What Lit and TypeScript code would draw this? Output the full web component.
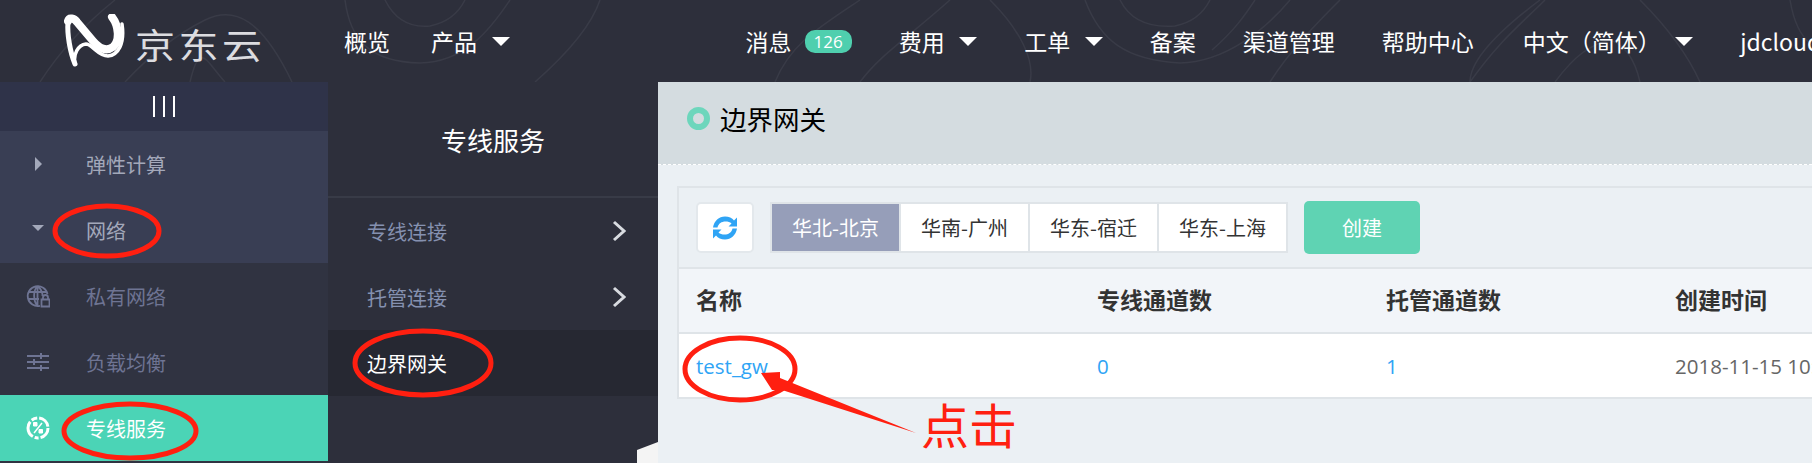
import type { TemplateResult } from 'lit';
import { css, html, LitElement, svg } from 'lit';
import { customElement } from 'lit/decorators.js';

const caret = html`<i class="caret"></i>`;

@customElement('app-root')
export class AppRoot extends LitElement {
  public static styles = css`
    :host {
      display: block;
      position: relative;
      width: 1812px;
      height: 463px;
      overflow: hidden;
      background: #2d2f3b;
      font-family: 'Noto Sans CJK SC', 'Open Sans', sans-serif;
      font-size: 20px;
    }

    .top {
      position: relative;
      display: flex;
      align-items: center;
      height: 82px;
      background: #2d2f3b;
      color: #fff;
      font-size: 23px;
      white-space: nowrap;
    }

    .lines {
      position: absolute;
      inset: 0;
    }

    .logo {
      position: relative;
      display: flex;
      align-items: center;
      width: 344px;
      height: 82px;
      padding-left: 64px;
      box-sizing: border-box;
      flex: none;
    }

    .logo-text {
      margin: 5px 0 0 10px;
      font-size: 40px;
      line-height: 1;
      letter-spacing: 3.500px;
      color: #dcdce0;
      transform: scaleY(0.88);
    }

    .nav {
      position: relative;
      display: flex;
      align-items: center;
      gap: 41px;
    }

    .nav.right {
      gap: 47px;
      margin-left: 236px;
    }

    .nav span.item {
      display: flex;
      align-items: center;
    }

    .nav span.lang {
      margin-left: 2px;
    }

    .caret {
      width: 0;
      height: 0;
      margin-left: 14.500px;
      border-left: 9px solid transparent;
      border-right: 9px solid transparent;
      border-top: 9px solid #fff;
    }

    .badge {
      margin-left: 13px;
      padding: 0 9px;
      height: 23px;
      line-height: 23px;
      border-radius: 10px;
      background: #4fcfae;
      font-size: 17px;
      font-family: 'Open Sans', sans-serif;
    }

    .body {
      display: flex;
      height: 381px;
    }

    .side {
      width: 328px;
      flex: none;
      background: #303341;
      color: #6e7493;
    }

    .toggle {
      display: flex;
      justify-content: center;
      align-items: center;
      gap: 8px;
      height: 49px;
      background: #2f3349;
    }

    .toggle i {
      width: 2px;
      height: 21px;
      background: #fff;
    }

    .group {
      background: #393e54;
      color: #a3a8ba;
    }

    .row {
      display: flex;
      align-items: center;
      height: 66px;
    }

    .ico {
      display: flex;
      justify-content: center;
      align-items: center;
      width: 76px;
      margin-right: 10px;
      flex: none;
    }

    .tri-r {
      width: 0;
      height: 0;
      border-top: 7px solid transparent;
      border-bottom: 7px solid transparent;
      border-left: 7px solid #a3a8ba;
    }

    .tri-d {
      width: 0;
      height: 0;
      margin-top: -4px;
      border-left: 6px solid transparent;
      border-right: 6px solid transparent;
      border-top: 6px solid #a3a8ba;
    }

    .row.on {
      background: #4bd4b6;
      color: #fff;
    }

    .sub {
      position: relative;
      width: 330px;
      flex: none;
      background: #2d2f3b;
      color: #8591b0;
    }

    .sub h2 {
      display: flex;
      justify-content: center;
      align-items: center;
      height: 114px;
      margin: 0;
      border-bottom: 2px solid #383b47;
      color: #fff;
      font-size: 26px;
      font-weight: 400;
    }

    .sub-row {
      display: flex;
      justify-content: space-between;
      align-items: center;
      height: 66px;
      padding: 0 32px 0 39px;
    }

    .sub-row.on {
      background: #262832;
      color: #fff;
    }

    .corner {
      position: absolute;
      right: 0;
      bottom: 0;
    }

    .main {
      flex: 1;
      min-width: 0;
      background: #ebf0f4;
    }

    .crumb {
      display: flex;
      align-items: center;
      height: 83px;
      padding: 0 0 9px 29px;
      background: #d4dce0;
      border-bottom: 1px dashed #fff;
      box-sizing: border-box;
      color: #000;
      font-size: 26.500px;
    }

    .dot {
      width: 23px;
      height: 23px;
      margin-right: 10px;
      border: 6px solid #6dd6bc;
      border-radius: 50%;
      box-sizing: border-box;
    }

    .card {
      margin: 21px 0 0 19px;
      border: solid #dfe4e8;
      border-width: 2px 0 2px 2px;
    }

    .tools {
      display: flex;
      align-items: center;
      height: 79px;
      padding-left: 17px;
    }

    .refresh {
      display: flex;
      justify-content: center;
      align-items: center;
      width: 58px;
      height: 51px;
      margin-right: 16px;
      background: #fff;
      border: 2px solid #e3e8ec;
      border-radius: 5px;
      box-sizing: border-box;
    }

    .tabs {
      display: flex;
      gap: 2px;
      padding: 2px;
      background: #dfe4e8;
    }

    .tabs span {
      display: flex;
      justify-content: center;
      align-items: center;
      width: 127px;
      height: 47px;
      background: #fff;
      color: #333;
    }

    .tabs span.on {
      background: #969eb9;
      color: #fff;
    }

    .create {
      display: flex;
      justify-content: center;
      align-items: center;
      width: 116px;
      height: 53px;
      margin-left: 16px;
      background: #5fd3b3;
      border-radius: 5px;
      color: #fff;
    }

    .tr {
      display: grid;
      grid-template-columns: 401px 289px 289px 1fr;
      align-items: center;
      height: 65px;
      padding-left: 17px;
      border-top: 2px solid #dfe4e8;
      box-sizing: border-box;
      white-space: nowrap;
    }

    .tr.head {
      padding-bottom: 4px;
      background: #f2f5f9;
      color: #333;
      font-size: 23px;
      font-weight: 700;
    }

    .tr.data {
      background: #fff;
      color: #666;
      font-family: 'Open Sans', sans-serif;
      font-size: 20.500px;
    }

    .tr.data a {
      color: #2fa4f5;
    }

    .marks {
      position: absolute;
      inset: 0;
      pointer-events: none;
    }

    .click {
      position: absolute;
      left: 921px;
      top: 391px;
      color: #ff2010;
      font-size: 48px;
      line-height: 64px;
    }
  `;

  public render(): TemplateResult {
    return html`
      <div class="top">
        <svg class="lines" width="1812" height="82" fill="none" stroke="#393b47" stroke-width="1.5">
          ${svg`<path d="M40 82C62 48 90 20 115 0M125 82C150 55 175 35 205 20 235 5 262 20 292 82M225 82C205 60 200 40 190 82M345 0C350 40 370 62 420 63 465 62 490 30 510 0M385 0C395 20 410 28 430 26 450 22 460 10 465 0M600 0C590 30 560 60 535 82M775 82C790 45 815 30 860 0M860 82C880 55 905 40 950 0M990 0C1020 30 1035 60 1030 82M1085 0C1100 40 1125 60 1180 63 1225 62 1265 30 1290 0M1120 0C1130 20 1150 28 1175 26 1195 22 1205 10 1210 0M1212 50C1235 30 1245 15 1255 0M1270 82C1290 50 1320 20 1340 0M1470 82C1500 40 1520 25 1545 0M1470 82C1470 60 1500 30 1540 0M1640 0C1670 30 1690 60 1700 82M1555 82C1575 55 1590 45 1610 40 1625 45 1635 60 1640 82M1790 0C1795 30 1805 40 1812 45"/>`}
        </svg>
        <div class="logo">
          <svg width="61" height="54" viewBox="0 0 61 54" fill="none" stroke="#fff" stroke-linecap="round">
            <path d="M4 7C5 3 10 4 13 8L29 27C35 34 42 38 49 33 56 27 55 12 48 3" stroke-width="8"/>
            <path d="M4 8C3 20 6 38 11 50" stroke-width="5"/>
            <path d="M11 50C9 40 14 31 22 30 28 30 34 42 44 42 54 41 61 30 58 10" stroke-width="3.500"/>
          </svg>
          <span class="logo-text">京东云</span>
        </div>
        <div class="nav">
          <span class="item">概览</span>
          <span class="item">产品${caret}</span>
        </div>
        <div class="nav right">
          <span class="item">消息<span class="badge">126</span></span>
          <span class="item">费用${caret}</span>
          <span class="item">工单${caret}</span>
          <span class="item">备案</span>
          <span class="item">渠道管理</span>
          <span class="item">帮助中心</span>
          <span class="item lang">中文（简体）${caret}</span>
          <span class="item">jdcloud</span>
        </div>
      </div>
      <div class="body">
        <div class="side">
          <div class="toggle"><i></i><i></i><i></i></div>
          <div class="group">
            <div class="row"><span class="ico"><i class="tri-r"></i></span>弹性计算</div>
            <div class="row"><span class="ico"><i class="tri-d"></i></span>网络</div>
          </div>
          <div class="row">
            <span class="ico">
              <svg width="24" height="24" viewBox="0 0 24 24" fill="none" stroke="#6e7493" stroke-width="1.800">
                <path d="M14 21.800A10 10 0 1 1 21.500 10M2 8H20M2 15H13M11.500 2C7 7 7 16 11.500 22M11.500 2C15 5 16.500 8 16.500 12M11.500 2V22"/>
                <path d="M15.500 15.500H23.500V22.500H15.500ZM17 15.500V13.500A2.500 2.500 0 0 1 22 13.500V15.500"/>
              </svg>
            </span>
            私有网络
          </div>
          <div class="row">
            <span class="ico">
              <svg width="22" height="20" viewBox="0 0 22 20" fill="none" stroke="#6e7493" stroke-width="2">
                <path d="M0 4H22M0 10H22M0 16H22M14 1V7M7 7V13M14 13V19"/>
              </svg>
            </span>
            负载均衡
          </div>
          <div class="row on">
            <span class="ico">
              <svg width="24" height="24" viewBox="0 0 24 24" fill="none" stroke="#fff" stroke-width="3">
                <circle cx="12" cy="12" r="10" stroke-dasharray="13 2 4 2 17 2 6 2 13 2"/>
                <path d="M7.500 6.500H11V10H7.500ZM13 13.500H16.500V17H13Z" fill="#fff" stroke-width="1"/>
                <path d="M16 7L8 17" stroke-width="1.500"/>
              </svg>
            </span>
            专线服务
          </div>
        </div>
        <div class="sub">
          <h2>专线服务</h2>
          <div class="sub-row">专线连接${this.chevron()}</div>
          <div class="sub-row">托管连接${this.chevron()}</div>
          <div class="sub-row on">边界网关</div>
          <svg class="corner" width="21" height="21"><path d="M0 8L21 0V21H0Z" fill="#f4f4f4"/></svg>
        </div>
        <div class="main">
          <div class="crumb"><i class="dot"></i>边界网关</div>
          <div class="card">
            <div class="tools">
              <span class="refresh">
                <svg width="26" height="26" viewBox="0 0 26 26" fill="#2fa4f5">
                  <path d="M1 12.500C2 6 7 1.500 13 1.500 17 1.500 20 3 22 5.500L25 2.500V11.500H16.500L19.500 8.500C18 7 16 6.500 13.500 6.500 9.500 6.500 6.500 8.500 5.500 12.500Z"/>
                  <path d="M25 13.500C24 20 19 24.500 13 24.500 9 24.500 6 23 4 20.500L1 23.500V14.500H9.500L6.500 17.500C8 19 10 19.500 12.500 19.500 16.500 19.500 19.500 17.500 20.500 13.500Z"/>
                </svg>
              </span>
              <div class="tabs">
                <span class="on">华北-北京</span>
                <span>华南-广州</span>
                <span>华东-宿迁</span>
                <span>华东-上海</span>
              </div>
              <span class="create">创建</span>
            </div>
            <div class="tr head">
              <span>名称</span><span>专线通道数</span><span>托管通道数</span><span>创建时间</span>
            </div>
            <div class="tr data">
              <a>test_gw</a><a>0</a><a>1</a><span>2018-11-15 10:21:36</span>
            </div>
          </div>
        </div>
      </div>
      <svg class="marks" width="1812" height="463" fill="none" stroke="#ff1f10" stroke-width="5">
        <ellipse cx="107" cy="231" rx="52" ry="25"/>
        <ellipse cx="130" cy="431" rx="66" ry="27"/>
        <ellipse cx="423" cy="363" rx="68" ry="32"/>
        <ellipse cx="740" cy="369" rx="55" ry="31"/>
        <path d="M761 373L780 372 780 378 916 433 782 390 772 390Z" fill="#ff1f10" stroke="none"/>
      </svg>
      <span class="click">点击</span>
    `;
  }

  private chevron(): TemplateResult {
    return html`<svg width="14" height="22" viewBox="0 0 14 22" fill="none" stroke="#d8dbe0" stroke-width="3">
      <path d="M2 2L12 11 2 20"/>
    </svg>`;
  }
}

declare global {
  interface HTMLElementTagNameMap {
    'app-root': AppRoot;
  }
}
